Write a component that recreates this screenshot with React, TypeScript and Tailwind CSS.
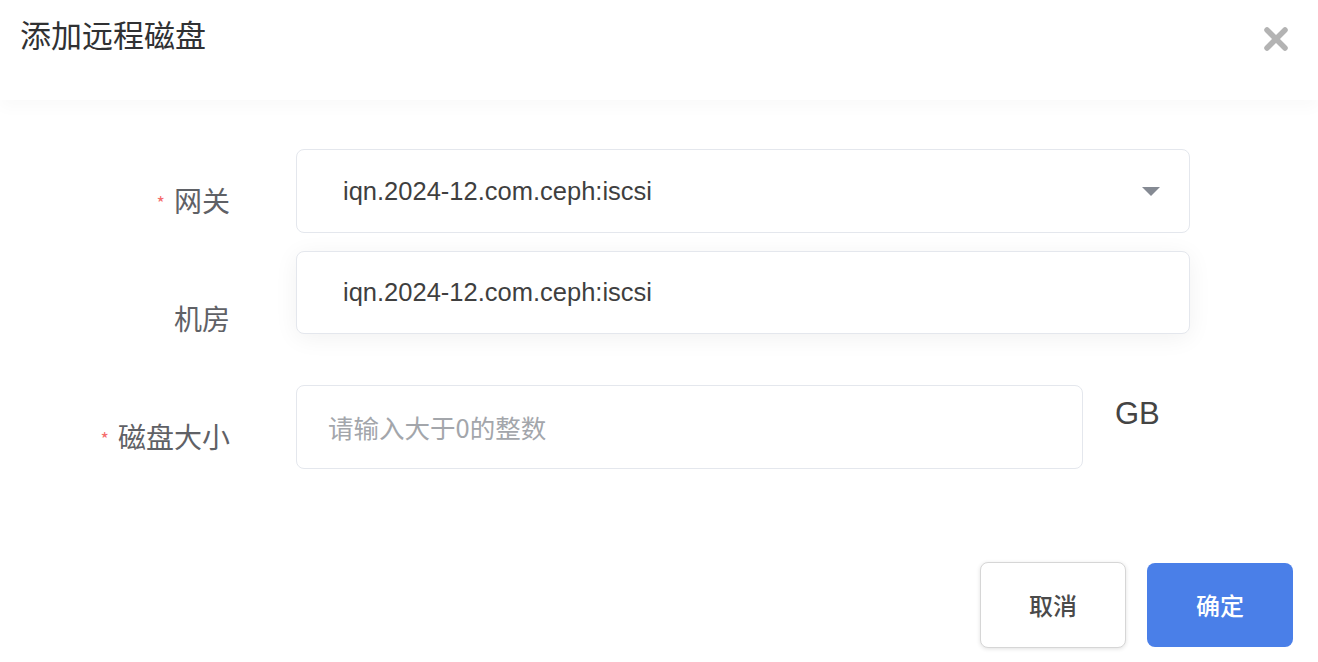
import React from "react"

const cjk = { fontFamily: '"Noto Sans CJK SC", "Noto Sans", sans-serif' }
const latin = { fontFamily: '"Liberation Sans", "Noto Sans CJK SC", sans-serif' }

function Label({ text, required }: { text: string; required?: boolean }) {
  return (
    <div className="w-[230px] shrink-0 text-right mt-[18px] text-[28px] leading-[38px] text-[#5f6166]" style={cjk}>
      {required && <span className="text-[#f56c6c] text-[18px] align-top mr-[9px] relative top-[2px]">*</span>}
      {text}
    </div>
  )
}

function CloseIcon() {
  return (
    <svg width="28" height="28" viewBox="0 0 28 28" className="text-[#b3b3b3]">
      <path d="M5 5 L23 23 M23 5 L5 23" stroke="currentColor" strokeWidth="5.5" strokeLinecap="round" />
    </svg>
  )
}

export default function App() {
  const gateway = "iqn.2024-12.com.ceph:iscsi"

  return (
    <div className="relative w-[1318px] h-[662px] overflow-hidden bg-white">
      {/* Header */}
      <div className="relative z-10 h-[100px] flex justify-between items-start pl-[20px] pr-[28px] bg-white shadow-[0_8px_14px_rgba(0,0,0,0.025)]">
        <h2 className="pt-[13px] text-[31px] leading-[42px] text-[#303133]" style={cjk}>
          添加远程磁盘
        </h2>
        <button className="mt-[25px]">
          <CloseIcon />
        </button>
      </div>

      {/* Form */}
      <div className="pt-[49px] flex flex-col gap-[34px]">
        <div className="flex items-center">
          <Label text="网关" required />
          <div className="ml-[66px] w-[894px] h-[84px] flex items-center justify-between pl-[46px] pr-[29px] border border-[#e4e7ed] rounded-[8px]">
            <span className="text-[25.5px] text-[#3f3f3f]" style={latin}>{gateway}</span>
            <svg width="18" height="9" viewBox="0 0 18 9">
              <path d="M0 0 H18 L9 9 Z" fill="#858a93" />
            </svg>
          </div>
        </div>

        <div className="flex items-center h-[84px]">
          <Label text="机房" />
        </div>

        <div className="flex items-start">
          <div className="h-[84px] flex items-center">
            <Label text="磁盘大小" required />
          </div>
          <div className="ml-[66px] w-[787px] h-[84px] flex items-center pl-[31px] border border-[#e4e7ed] rounded-[8px]">
            <span className="text-[25.5px] text-[#a3a6ab]" style={cjk}>请输入大于0的整数</span>
          </div>
          <span className="ml-[32px] mt-[11px] text-[31px] leading-[36px] text-[#444]" style={latin}>GB</span>
        </div>
      </div>

      {/* Footer buttons */}
      <div className="mt-[93px] flex justify-end items-start gap-[21px] pr-[25px]">
        <button
          className="w-[146px] h-[86px] rounded-[8px] border border-[#d6d6d6] bg-white shadow-[0_1px_4px_rgba(0,0,0,0.12)] text-[24px] text-[#4a4a4a] font-medium"
          style={cjk}
        >
          取消
        </button>
        <button
          className="mt-[1px] w-[146px] h-[84px] rounded-[8px] bg-[#4a7fe8] text-[24px] text-white font-medium"
          style={cjk}
        >
          确定
        </button>
      </div>

      {/* Open dropdown for the gateway select */}
      <div className="absolute left-[296px] top-[251px] w-[894px] h-[83px] flex items-center pl-[46px] bg-white border border-[#e4e7ed] rounded-[8px] shadow-[0_4px_24px_rgba(0,0,0,0.06)]">
        <span className="text-[25.5px] text-[#3f3f3f]" style={latin}>{gateway}</span>
      </div>
    </div>
  )
}
